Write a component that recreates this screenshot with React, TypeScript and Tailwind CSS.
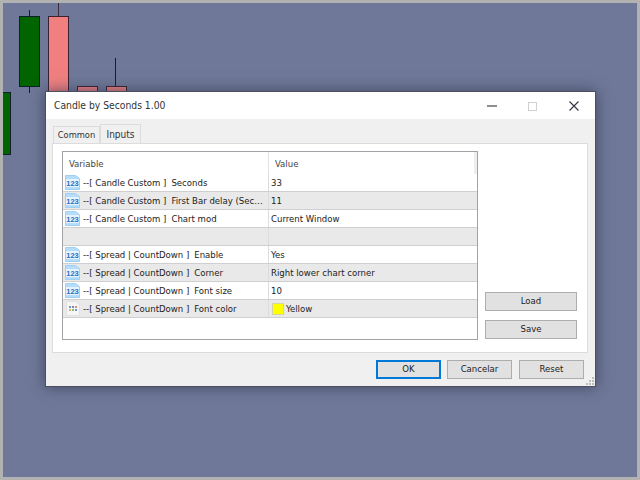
const rows = [
  { group: "--[ Candle Custom ]", name: "Seconds", value: "33", alt: false },
  { group: "--[ Candle Custom ]", name: "First Bar delay (Sec…", value: "11", alt: true },
  { group: "--[ Candle Custom ]", name: "Chart mod", value: "Current Window", alt: false },
  { group: "", name: "", value: "", alt: true },
  { group: "--[ Spread | CountDown ]", name: "Enable", value: "Yes", alt: false },
  { group: "--[ Spread | CountDown ]", name: "Corner", value: "Right lower chart corner", alt: true },
  { group: "--[ Spread | CountDown ]", name: "Font size", value: "10", alt: false },
  { group: "--[ Spread | CountDown ]", name: "Font color", value: "Yellow", alt: true, color: true },
];

function NumIcon() {
  return (
    <svg width="15" height="15" viewBox="0 0 15 15" className="shrink-0">
      <path d="M0.5 0.5H10.5L14.5 3.5V14.5H0.5Z" fill="#b5dcf8" stroke="#9fd0f3" />
      <rect x="1" y="4" width="13" height="8" fill="#e6f3fc" />
      <text x="7.5" y="10.8" textAnchor="middle" fontSize="7.5" fontWeight="700" fill="#2a6fc0" fontFamily="Liberation Sans, sans-serif">
        123
      </text>
    </svg>
  );
}

function ColorIcon() {
  return (
    <svg width="15" height="15" viewBox="0 0 15 15" className="shrink-0">
      <path d="M1.5 0.5H10.5L14.5 3.5V14.5H1.5Z" fill="#f6f6f6" stroke="#e0e0e0" />
      <rect x="4" y="5" width="2" height="2" fill="#6f97d8" />
      <rect x="7" y="5" width="2" height="2" fill="#8a8a8a" />
      <rect x="10" y="5" width="2" height="2" fill="#d98a86" />
      <rect x="4" y="8" width="2" height="2" fill="#e0b45c" />
      <rect x="7" y="8" width="2" height="2" fill="#7fbf7f" />
      <rect x="10" y="8" width="2" height="2" fill="#6f97d8" />
    </svg>
  );
}

function Candles() {
  return (
    <>
      <div className="absolute left-[26px] top-[7px] h-[83px] w-px bg-[#1b1b2b]" />
      <div className="absolute left-[16px] top-[13px] h-[71px] w-[21px] border border-[#10202a] bg-[#006400]" />
      <div className="absolute left-[55px] top-0 h-[14px] w-px bg-[#3a2a3a]" />
      <div className="absolute left-[45px] top-[13px] h-[80px] w-[21px] border border-[#3a2030] bg-[#f08080]" />
      <div className="absolute left-[74px] top-[83px] h-[10px] w-[21px] border border-[#3a2030] bg-[#f08080]" />
      <div className="absolute left-[112px] top-[55px] h-[29px] w-px bg-[#1b1b2b]" />
      <div className="absolute left-[103px] top-[83px] h-[10px] w-[21px] border border-[#3a2030] bg-[#f08080]" />
      <div className="absolute left-0 top-[89px] h-[63px] w-[8px] border border-l-0 border-[#10202a] bg-[#006400]" />
    </>
  );
}

function Btn({ label, className }: { label: string; className: string }) {
  return (
    <div className={"flex items-center justify-center border bg-[#e1e1e1] text-[9.5px] text-[#222] " + className}>
      {label}
    </div>
  );
}

export default function App() {
  return (
    <div className="h-[480px] w-[640px] overflow-hidden border-[3px] border-[#b2b2b2] bg-[#6f7898] font-['DejaVu_Sans_Condensed','Liberation_Sans',sans-serif]">
      <div className="relative h-[474px] w-[634px]">
        <Candles />

        {/* window */}
        <div className="absolute left-[42px] top-[88px] flex h-[296px] w-[551px] flex-col border border-[#4c4f60] bg-[#f0f0f0] shadow-[0_0_14px_rgba(50,55,80,0.75)]">
          <div className="flex h-[27px] shrink-0 items-center justify-between bg-white pl-[8px] pr-[1px] pt-[1px]">
            <span className="text-[10.25px] text-[#333]">Candle by Seconds 1.00</span>
            <div className="flex items-center">
              <div className="flex w-[41px] justify-center">
                <div className="h-[2px] w-[10px] bg-[#8e8e8e]" />
              </div>
              <div className="flex w-[41px] justify-center">
                <div className="h-[9px] w-[9px] border border-[#d0d0d0]" />
              </div>
              <div className="flex w-[41px] justify-center">
                <svg width="10" height="10" viewBox="0 0 10 10">
                  <path d="M0.5 0.5L9.5 9.5M9.5 0.5L0.5 9.5" stroke="#333344" strokeWidth="1.1" />
                </svg>
              </div>
            </div>
          </div>

          <div className="flex grow flex-col pl-[6px] pr-[7px] pt-[4px]">
            <div className="flex h-[20px] items-end pl-[1px]">
              <div className="flex h-[17px] w-[47px] items-center justify-center border border-b-0 border-[#dcdcdc] bg-[#f0f0f0] text-[9.25px] text-[#333]">
                Common
              </div>
              <div className="-mb-px flex h-[20px] w-[41px] items-center justify-center border border-b-0 border-[#dcdcdc] bg-[#f0f0f0] text-[10px] text-[#333]">
                Inputs
              </div>
            </div>

            <div className="flex h-[210px] gap-[7px] border border-[#dcdcdc] bg-white pb-[11px] pl-[9px] pr-[9px] pt-[7px]">
              <div className="h-[189px] w-[416px] shrink-0 border border-[#a0a3a8] bg-white">
                <div className="flex h-[22px] items-center border-r-[3px] border-r-[#eeeeee] text-[9.5px] text-[#444]">
                  <div className="flex h-full w-[206px] items-center border-r border-[#e4e4e4] pl-[6px] pt-[2px]">Variable</div>
                  <div className="flex h-full items-center pl-[6px] pt-[2px]">Value</div>
                </div>
                {rows.map((r, i) => (
                  <div
                    key={i}
                    className={
                      "flex h-[18px] items-center border-b border-[#cfcfcf] text-[9.5px] text-[#222] " +
                      (r.alt ? "bg-[#e9e9e9]" : "bg-white")
                    }
                  >
                    <div className="flex h-full w-[206px] shrink-0 items-center overflow-hidden border-r border-[#dcdcdc] pl-[2px]">
                      {r.group && (r.color ? <ColorIcon /> : <NumIcon />)}
                      {r.group && <span className="ml-[3px] whitespace-pre pt-[2px]">{r.group}</span>}
                      {r.name && <span className="ml-[5px] whitespace-pre pt-[2px]">{r.name}</span>}
                    </div>
                    <div className="flex h-full items-center pl-[2px]">
                      {r.color && <div className="ml-[1px] mr-[2px] mt-[1px] h-[12px] w-[12px] border border-[#d4d4a0] bg-[#ffff00]" />}
                      <span className="pt-[2px]">{r.value}</span>
                    </div>
                  </div>
                ))}
              </div>

              <div className="flex w-[92px] flex-col justify-end gap-[9px] pb-[2px]">
                <Btn label="Load" className="h-[19px] border-[#adadad]" />
                <Btn label="Save" className="h-[19px] border-[#adadad]" />
              </div>
            </div>
          </div>

          <div className="relative flex h-[33px] shrink-0 items-center gap-[6px] pl-[330px]">
            <Btn label="OK" className="h-[19px] w-[65px] border-2 border-[#0078d7]" />
            <Btn label="Cancelar" className="h-[19px] w-[65px] border-[#adadad]" />
            <Btn label="Reset" className="ml-[1px] h-[19px] w-[65px] border-[#adadad]" />
            <svg width="9" height="9" viewBox="0 0 9 9" className="absolute bottom-0 right-0">
              <path d="M6 0h2v2H6zM3 3h2v2H3zM6 3h2v2H6zM0 6h2v2H0zM3 6h2v2H3zM6 6h2v2H6z" fill="#bdbdbd" />
            </svg>
          </div>
        </div>
      </div>
    </div>
  );
}
